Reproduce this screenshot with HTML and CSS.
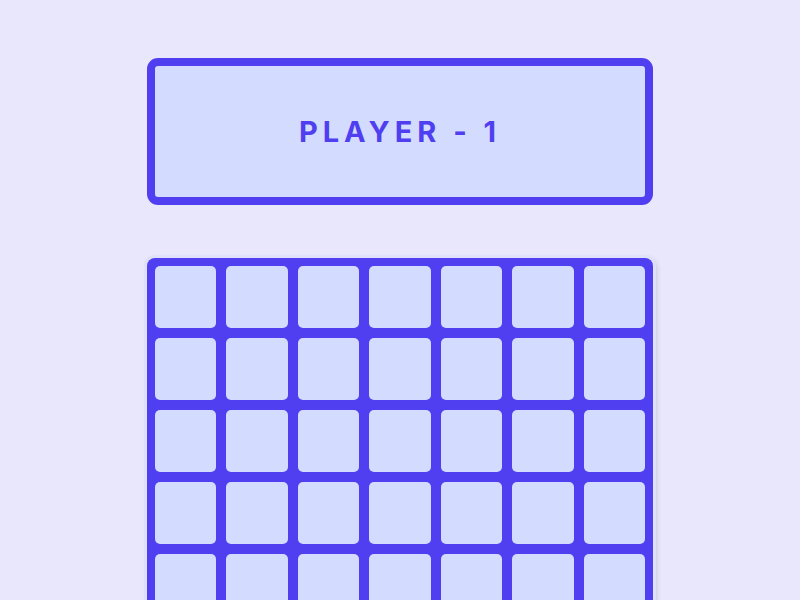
FILE: index.html
```html
<!DOCTYPE html>
<html lang="en">

<head>
    <meta charset="UTF-8">
    <meta name="viewport" content="width=device-width, initial-scale=1.0">
    <title>Connect Four</title>
    <link rel="stylesheet" href="styles.css">
</head>

<body>
    <div class="game">
        <!-- Turn indicator -->
        <div class="player-box">
            <h1 class="player-name">PLAYER - 1</h1>
        </div>

        <!-- Board -->
        <div class="board" id="board"></div>
    </div>

    <script>
        // Build the 7 x 6 board
        const board = document.getElementById('board');
        for (let i = 0; i < 42; i++) {
            const cell = document.createElement('div');
            cell.className = 'cell';
            board.appendChild(cell);
        }
    </script>
</body>

</html>
```

FILE: styles.css
```css
/* Global Styles */
* {
    margin: 0;
    padding: 0;
    box-sizing: border-box;
}

body {
    background: #e9e7fb;
    font-family: "Inter", "Liberation Sans", sans-serif;
}

.game {
    width: 506px;
    margin: 58px auto 0;
    display: flex;
    flex-direction: column;
    gap: 53px;
}

/* Player box */
.player-box {
    height: 147px;
    border: 8px solid #4f3ff0;
    border-radius: 11px;
    background: #d3dcfe;
    display: flex;
    justify-content: center;
    align-items: center;
}

.player-name {
    color: #4f3ff0;
    font-size: 29px;
    font-weight: 700;
    letter-spacing: 5px;
}

/* Board */
.board {
    background: #4f3ff0;
    padding: 8px;
    border-radius: 8px;
    display: grid;
    grid-template-columns: repeat(7, 1fr);
    grid-auto-rows: 62px;
    gap: 10px;
    box-shadow: 0 0 0 3px #dfe0fa, 2px 2px 6px rgba(0, 0, 0, 0.25);
}

.cell {
    background: #d3dcfe;
    border-radius: 5px;
}
```
